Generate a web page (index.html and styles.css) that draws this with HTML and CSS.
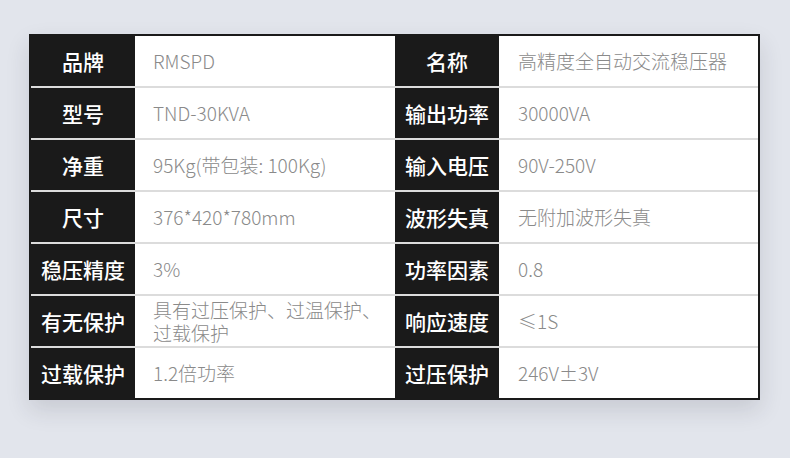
FILE: index.html
```html
<!DOCTYPE html>
<html lang="zh-CN">
<head>
<meta charset="utf-8">
<link rel="stylesheet" href="styles.css">
</head>
<body>
<div class="page">
  <div class="spec">
    <div class="row">
      <div class="label">品牌</div><div class="value">RMSPD</div>
      <div class="label">名称</div><div class="value">高精度全自动交流稳压器</div>
    </div>
    <div class="row">
      <div class="label">型号</div><div class="value">TND-30KVA</div>
      <div class="label">输出功率</div><div class="value">30000VA</div>
    </div>
    <div class="row">
      <div class="label">净重</div><div class="value">95Kg(带包装: 100Kg)</div>
      <div class="label">输入电压</div><div class="value">90V-250V</div>
    </div>
    <div class="row">
      <div class="label">尺寸</div><div class="value">376*420*780mm</div>
      <div class="label">波形失真</div><div class="value">无附加波形失真</div>
    </div>
    <div class="row">
      <div class="label">稳压精度</div><div class="value">3%</div>
      <div class="label">功率因素</div><div class="value">0.8</div>
    </div>
    <div class="row">
      <div class="label">有无保护</div><div class="value multi">具有过压保护、过温保护、过载保护</div>
      <div class="label">响应速度</div><div class="value">≤1S</div>
    </div>
    <div class="row">
      <div class="label">过载保护</div><div class="value">1.2倍功率</div>
      <div class="label">过压保护</div><div class="value">246V±3V</div>
    </div>
  </div>
</div>
</body>
</html>
```
FILE: styles.css
```css
html, body {
  margin: 0;
  padding: 0;
}
body {
  background: #e2e5ec;
  width: 790px;
  height: 458px;
  overflow: hidden;
  font-family: "Noto Sans CJK SC", "Noto Sans", sans-serif;
}
.page {
  padding: 34px 0 0 29px;
}
.spec {
  width: 727px;
  border: 2px solid #1a1a1a;
  background: #1a1a1a;
  box-shadow: 0 10px 22px rgba(40, 45, 60, 0.14);
}
.row {
  display: grid;
  grid-template-columns: 104px 260px 104px 259px;
  height: 50px;
}
.row + .row {
  border-top: 2px solid #dcdcdc;
}
.label {
  background: #1a1a1a;
  color: #ffffff;
  font-size: 21px;
  font-weight: 500;
  display: flex;
  align-items: center;
  justify-content: center;
  white-space: nowrap;
}
.value {
  background: #ffffff;
  color: #8a8a8a;
  font-size: 19px;
  font-weight: 300;
  line-height: 1.25;
  display: flex;
  align-items: center;
  padding: 0 10px 0 18px;
}
.row .value:last-child {
  padding-left: 19px;
}
.multi {
  line-height: 23px;
}
```
